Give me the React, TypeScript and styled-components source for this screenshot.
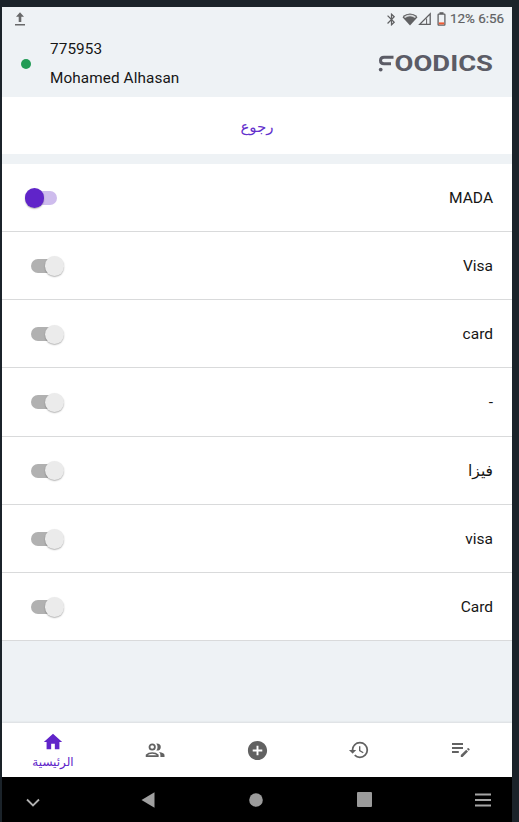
import React from 'react';
import styled, { createGlobalStyle } from 'styled-components';
import { MdHome, MdAddCircle, MdHistory, MdBluetooth } from 'react-icons/md';

const GlobalStyle = createGlobalStyle`
  * { box-sizing: border-box; }
  body { margin: 0; background: #1b232a; }
`;

const Device = styled.div`
  width: 519px;
  height: 822px;
  padding: 7px 7px 0 2px;
  background: #1b232a;
  font-family: Roboto, 'Noto Sans', 'DejaVu Sans', sans-serif;
  color: #161616;
  overflow: hidden;
`;

const Screen = styled.div`
  display: flex;
  flex-direction: column;
  height: 815px;
  background: #eef2f5;
`;

const StatusBar = styled.div`
  display: flex;
  align-items: center;
  height: 24px;
  padding: 0 7px 0 12px;
  color: #606163;
  svg { display: block; flex: none; }
`;

const StatusIcons = styled.div`
  display: flex;
  align-items: center;
  margin-left: auto;
`;

const StatusText = styled.span`
  margin-left: 4px;
  font-size: 13.4px;
  font-weight: 400;
  line-height: 16px;
  width: 55px;
  white-space: nowrap;
  -webkit-text-stroke: 0.2px currentColor;
`;

const Header = styled.header`
  display: flex;
  align-items: center;
  height: 66px;
  padding: 0 18px 1px 19px;
`;

const OnlineDot = styled.span`
  width: 10px;
  height: 10px;
  border-radius: 50%;
  background: #219b55;
`;

const Account = styled.div`
  flex: 1;
  margin-left: 19px;
  font-size: 15.3px;
  line-height: 29px;
  letter-spacing: 0.1px;
`;

const BackButton = styled.button`
  display: flex;
  justify-content: center;
  align-items: center;
  height: 57px;
  margin-bottom: 10px;
  padding: 3px 0 0;
  border: 0;
  background: #fff;
  color: #6330cc;
  font-family: 'DejaVu Sans', sans-serif;
  font-size: 15px;
`;

const MethodList = styled.main`
  display: flex;
  flex-direction: column;
  height: 477px;
`;

const MethodRow = styled.div`
  display: flex;
  flex: 1;
  align-items: center;
  justify-content: space-between;
  padding: 1px 19px 0 23px;
  background: #fff;
  border-bottom: 1px solid #d9dadb;
`;

const MethodName = styled.span`
  font-size: 15.5px;
  line-height: 20px;
`;

const Track = styled.button<{ $on: boolean }>`
  display: flex;
  align-items: center;
  justify-content: ${p => (p.$on ? 'flex-start' : 'flex-end')};
  width: 32px;
  height: 14px;
  margin-left: ${p => (p.$on ? 0 : 6)}px;
  padding: 0;
  border: 0;
  border-radius: 7px;
  background: ${p => (p.$on ? '#cebced' : '#b1b1b1')};
`;

const Thumb = styled.span<{ $on: boolean }>`
  flex: none;
  width: 19.5px;
  height: 19.5px;
  margin: 0 ${p => (p.$on ? '0 0 -0.5px' : '-1px 0 0')};
  border-radius: 50%;
  background: ${p => (p.$on ? '#6024c9' : '#ebebeb')};
  box-shadow: 0 1px 1.5px rgba(0, 0, 0, 0.3);
`;

const TabBar = styled.nav`
  display: grid;
  grid-template-columns: repeat(5, 1fr);
  height: 54px;
  margin-top: auto;
  background: #fff;
  box-shadow: 0 -1px 2px rgba(0, 0, 0, 0.09);
`;

const Tab = styled.div<{ $active?: boolean }>`
  display: flex;
  flex-direction: column;
  align-items: center;
  justify-content: center;
  padding-top: ${p => (p.$active ? 2 : 0)}px;
  color: ${p => (p.$active ? '#6024c9' : '#626262')};
  svg { display: block; flex: none; }
`;

const TabLabel = styled.span`
  height: 18px;
  font-family: 'DejaVu Sans', sans-serif;
  font-size: 12px;
  line-height: 18px;
`;

const SystemBar = styled.div`
  display: flex;
  align-items: center;
  justify-content: space-between;
  height: 45px;
  padding: 0 21px 0 23px;
  background: #000;
  svg { display: block; flex: none; }
`;

const SystemKeys = styled.div`
  display: flex;
  align-items: center;
  gap: 94px;
  margin-right: 4px;
`;

const methods = [
  { name: 'MADA', on: true },
  { name: 'Visa', on: false },
  { name: 'card', on: false },
  { name: '-', on: false },
  { name: 'فيزا', on: false },
  { name: 'visa', on: false },
  { name: 'Card', on: false },
];

const Logo = () => (
  <svg width="116" height="32" viewBox="0 0 116 32" role="img" aria-label="Foodics">
    <path d="M15.5 9.3H6Q2.5 9.3 2.5 12.5T6 15.7H13" fill="none" stroke="#5b5c66" strokeWidth="3" />
    <circle cx="2.7" cy="21.6" r="1.9" fill="#5b5c66" />
    <text x="16.5" y="23.4" textLength="98.5" lengthAdjust="spacingAndGlyphs" fill="#5b5c66" fontFamily="Roboto, sans-serif" fontWeight="700" fontSize="21.5">OODICS</text>
  </svg>
);

const PeopleIcon = () => (
  <svg width="20" height="15" viewBox="0 0 20 15">
    <circle cx="7.2" cy="4" r="2.7" fill="none" stroke="currentColor" strokeWidth="1.8" />
    <path d="M11.3.4Q15.8.2 15.8 4T11.3 7.6Q13.8 4 11.3.4z" fill="currentColor" />
    <path d="M1.6 13.1V12Q3.5 10 7.2 10T12.8 12v1.1z" fill="none" stroke="currentColor" strokeWidth="1.7" />
    <path d="M14 9.1Q19.5 10 19.5 12.2V14h-4.1v-2Q15.4 10.2 14 9.1z" fill="currentColor" />
  </svg>
);

const EditNoteIcon = () => (
  <svg width="18" height="16" viewBox="0 0 18 16">
    <path d="M0 2h11M0 6h11M0 10h6.8" stroke="currentColor" strokeWidth="1.8" />
    <path d="M8.8 13.1 14.2 7.7 16 9.5 10.6 15H8.8zM14.9 7l.8-.8q.5-.4 1 0l.8.8q.4.5 0 1l-.8.8z" fill="currentColor" />
  </svg>
);

export default function App() {
  return (
    <>
      <GlobalStyle />
      <Device>
        <Screen>
          <StatusBar>
            <svg width="12" height="14" viewBox="0 0 12 14">
              <path d="M6 .3 10 4.8H7.3V10H4.7V4.8H2zM1 12h10v1.4H1z" fill="#68696a" />
            </svg>
            <StatusIcons>
              <MdBluetooth size={15} />
              <svg width="38" height="16" viewBox="0 0 38 16">
                <path d="M3.5 6.2Q11 .2 18.5 6.2L11 14.4z" fill="#606163" />
                <path d="M4.8 5.7Q11 1.3 17.2 5.7L16 7Q11 3.5 6 7z" fill="#d4d7d9" />
                <path d="M4.2 5.6Q11 .4 17.8 5.6" fill="none" stroke="#606163" strokeWidth="1.2" />
                <path d="M20.7 13.4H31.2V2.9z" fill="none" stroke="#606163" strokeWidth="1.3" />
                <path d="M27.6 7.5v5.9" stroke="#606163" strokeWidth="1" />
              </svg>
              <svg width="9" height="14" viewBox="0 0 9 14">
                <path d="M2.5.2h4V2h-4z" fill="#606163" />
                <rect x="1.1" y="2.1" width="6.8" height="11" rx=".6" fill="none" stroke="#606163" strokeWidth="1.3" />
                <path d="M1.8 10.4h5.4v2H1.8z" fill="#f05a33" />
              </svg>
              <StatusText>12% 6:56</StatusText>
            </StatusIcons>
          </StatusBar>
          <Header>
            <OnlineDot />
            <Account>
              <div>775953</div>
              <div>Mohamed Alhasan</div>
            </Account>
            <Logo />
          </Header>
          <BackButton>رجوع</BackButton>
          <MethodList>
            {methods.map(m => (
              <MethodRow key={m.name}>
                <Track $on={m.on} role="switch" aria-checked={m.on}>
                  <Thumb $on={m.on} />
                </Track>
                <MethodName>{m.name}</MethodName>
              </MethodRow>
            ))}
          </MethodList>
          <TabBar>
            <Tab $active>
              <MdHome size={22} />
              <TabLabel>الرئيسية</TabLabel>
            </Tab>
            <Tab><PeopleIcon /></Tab>
            <Tab><MdAddCircle size={23} /></Tab>
            <Tab><MdHistory size={22} /></Tab>
            <Tab><EditNoteIcon /></Tab>
          </TabBar>
          <SystemBar>
            <svg width="16" height="16" viewBox="0 0 16 16"><path d="m2 7.5 6 6 6-6" fill="none" stroke="#b0b0b0" strokeWidth="1.8" /></svg>
            <SystemKeys>
              <svg width="14" height="16" viewBox="0 0 14 16"><path d="M.5 8 13.5.3v15.4z" fill="#a0a0a0" /></svg>
              <svg width="14" height="14" viewBox="0 0 14 14"><circle cx="7" cy="7" r="6.8" fill="#9b9b9b" /></svg>
              <svg width="15" height="15" viewBox="0 0 15 15"><rect width="15" height="15" rx="1" fill="#9b9b9b" /></svg>
            </SystemKeys>
            <svg width="16" height="14" viewBox="0 0 16 14"><path d="M0 1.5h16M0 7h16M0 12.5h16" stroke="#a5a5a5" strokeWidth="2" /></svg>
          </SystemBar>
        </Screen>
      </Device>
    </>
  );
}
